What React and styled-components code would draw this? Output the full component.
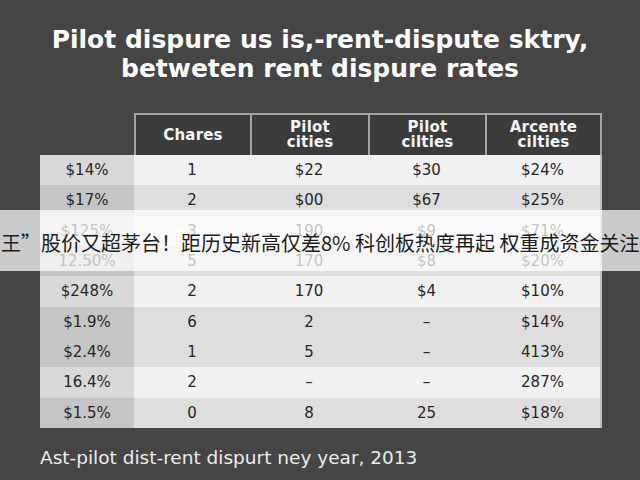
import React from "react";
import styled, { createGlobalStyle } from "styled-components";

const GlobalStyle = createGlobalStyle`
  html, body {
    margin: 0;
    padding: 0;
    background: #454545;
  }
  body {
    font-family: "Liberation Sans", Arial, sans-serif;
  }
`;

const Page = styled.div`
  position: relative;
  width: 640px;
  height: 480px;
  overflow: hidden;
  background: #454545;
  padding-top: 25px;
  box-sizing: border-box;
`;

const Title = styled.h1`
  margin: 0;
  text-align: center;
  color: #ffffff;
  font-family: "DejaVu Sans", Verdana, sans-serif;
  font-weight: 700;
  font-size: 25px;
  line-height: 29px;
  letter-spacing: 0px;
`;

const Grid = styled.div`
  display: grid;
  grid-template-columns: 94px 116px 118px 117px 117px;
  grid-template-rows: 42px repeat(9, 30.33px);
  margin: 30px 0 0 40px;
  width: 562px;
`;

const HeadCell = styled.div`
  display: flex;
  align-items: center;
  justify-content: center;
  text-align: center;
  background: ${(p) => (p.$empty ? "transparent" : "#3b3b3b")};
  border-top: ${(p) => (p.$empty ? "none" : "2px solid #a3a3a3")};
  border-left: ${(p) => (p.$empty ? "none" : "2px solid #a3a3a3")};
  border-right: ${(p) => (p.$last ? "2px solid #a3a3a3" : "none")};
  color: #f4f4f4;
  font-family: "DejaVu Sans", Verdana, sans-serif;
  font-weight: 700;
  font-size: 15px;
  line-height: 15px;
  letter-spacing: 0.2px;
`;

const shades = {
  light: ["#d9d9d9", "#f1f1f1"],
  dark: ["#c5c5c5", "#dedede"],
};

const Cell = styled.div`
  display: flex;
  align-items: center;
  justify-content: center;
  background: ${(p) => shades[p.$shade][p.$first ? 0 : 1]};
  border-right: ${(p) => (p.$last ? "2px solid #bdbdbd" : "none")};
  color: #262626;
  font-family: "DejaVu Sans", Verdana, sans-serif;
  font-size: 15px;
`;

const Footer = styled.div`
  margin: 19px 0 0 40px;
  color: #ececec;
  font-family: "DejaVu Sans", Verdana, sans-serif;
  font-size: 18.5px;
`;

const Banner = styled.div`
  position: absolute;
  left: 0;
  right: 0;
  top: 210px;
  height: 61px;
  display: flex;
  align-items: center;
  padding-top: 3px;
  box-sizing: border-box;
  background: rgba(255, 255, 255, 0.72);
  overflow: hidden;
`;

const BannerText = styled.span`
  white-space: nowrap;
  margin-left: 1px;
  color: #1c1c1c;
  font-family: "Noto Sans CJK SC", sans-serif;
  font-size: 20px;
`;

const headers = ["", "Chares", "Pilot\ncities", "Pilot\ncilties", "Arcente\ncilties"];

const rows = [
  { shade: "light", cells: ["$14%", "1", "$22", "$30", "$24%"] },
  { shade: "dark", cells: ["$17%", "2", "$00", "$67", "$25%"] },
  { shade: "light", cells: ["$125%", "3", "190", "$9", "$71%"] },
  { shade: "dark", cells: ["12.50%", "5", "170", "$8", "$20%"] },
  { shade: "light", cells: ["$248%", "2", "170", "$4", "$10%"] },
  { shade: "dark", cells: ["$1.9%", "6", "2", "–", "$14%"] },
  { shade: "dark", cells: ["$2.4%", "1", "5", "–", "413%"] },
  { shade: "light", cells: ["16.4%", "2", "–", "–", "287%"] },
  { shade: "dark", cells: ["$1.5%", "0", "8", "25", "$18%"] },
];

const App = () => {
  return (
    <Page>
      <GlobalStyle />
      <Title>
        Pilot dispure us is,-rent-dispute sktry,
        <br />
        betweten rent dispure rates
      </Title>
      <Grid>
        {headers.map((h, i) => (
          <HeadCell key={i} $empty={i === 0} $last={i === headers.length - 1}>
            {h.split("\n").map((line, j) => (
              <React.Fragment key={j}>
                {j > 0 && <br />}
                {line}
              </React.Fragment>
            ))}
          </HeadCell>
        ))}
        {rows.map((row, r) =>
          row.cells.map((c, i) => (
            <Cell
              key={r + "-" + i}
              $shade={row.shade}
              $first={i === 0}
              $last={i === row.cells.length - 1}
            >
              {c}
            </Cell>
          ))
        )}
      </Grid>
      <Footer>Ast-pilot dist-rent dispurt ney year, 2013</Footer>
      <Banner>
        <BannerText>王”股价又超茅台！距历史新高仅差8% 科创板热度再起 权重成资金关注</BannerText>
      </Banner>
    </Page>
  );
};

export default App;
